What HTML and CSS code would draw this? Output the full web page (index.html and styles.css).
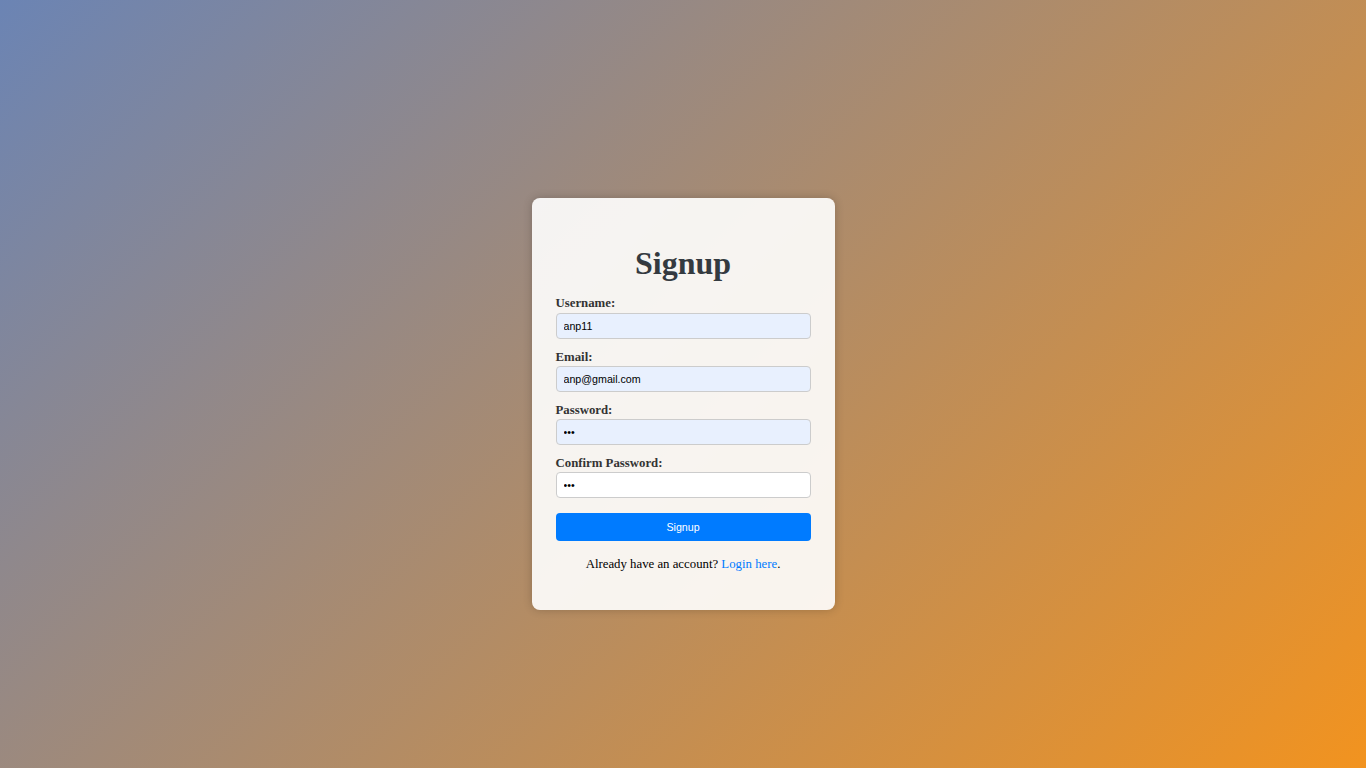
FILE: index.html
```html
<!DOCTYPE html>
<html lang="en">
<head>
<meta charset="utf-8">
<title>Signup</title>
<link rel="stylesheet" href="styles.css">
</head>
<body>
  <div class="card">
    <h2 class="title">Signup</h2>
    <form class="form">
      <div class="group">
        <label class="label" for="u">Username:</label>
        <input class="input filled" id="u" type="text" value="anp11">
      </div>
      <div class="group">
        <label class="label" for="e">Email:</label>
        <input class="input filled" id="e" type="email" value="anp@gmail.com">
      </div>
      <div class="group">
        <label class="label" for="p">Password:</label>
        <input class="input filled" id="p" type="password" value="abc">
      </div>
      <div class="group">
        <label class="label" for="c">Confirm Password:</label>
        <input class="input" id="c" type="password" value="abc">
      </div>
      <button class="btn" type="button">Signup</button>
    </form>
    <p class="foot">Already have an account? <a class="link" href="#">Login here</a>.</p>
  </div>
</body>
</html>
```

FILE: styles.css
```css
html, body {
  margin: 0;
  padding: 0;
}
body {
  min-height: 100vh;
  box-sizing: border-box;
  padding-top: 40px;
  display: flex;
  align-items: center;
  justify-content: center;
  background: linear-gradient(135deg, #6b84b4, #f2931f);
  font-family: "Liberation Serif", "Times New Roman", serif;
}
.card {
  width: 255px;
  padding: 24px;
  background: rgba(255, 255, 255, 0.9);
  border-radius: 8px;
  box-shadow: 0 0 10px rgba(0, 0, 0, 0.2);
}
.title {
  margin: 22.5px 0 15.5px;
  font-size: 32px;
  line-height: 36px;
  font-weight: bold;
  text-align: center;
  color: #343a40;
}
.form {
  display: flex;
  flex-direction: column;
}
.group {
  display: flex;
  flex-direction: column;
  margin-bottom: 10.67px;
}
.label {
  font-size: 12.8px;
  line-height: 15px;
  font-weight: bold;
  color: #333;
  margin-bottom: 1.5px;
}
.input {
  box-sizing: border-box;
  height: 26px;
  width: 100%;
  margin: 0;
  padding: 0 7px;
  border: 1px solid #ccc;
  border-radius: 4px;
  background: #fff;
  font-family: "Liberation Sans", Arial, sans-serif;
  font-size: 10.67px;
  color: #000;
  outline: none;
}
.input.filled {
  background: #e8f0fe;
}
.btn {
  margin-top: 4px;
  height: 28px;
  width: 100%;
  border: none;
  border-radius: 4px;
  background: #007bff;
  color: #fff;
  font-family: "Liberation Sans", Arial, sans-serif;
  font-size: 10.67px;
  cursor: pointer;
}
.foot {
  margin: 16px 0 13.5px;
  font-size: 12.8px;
  line-height: 15px;
  text-align: center;
  color: #000;
}
.link {
  color: #007bff;
  text-decoration: none;
}
```
